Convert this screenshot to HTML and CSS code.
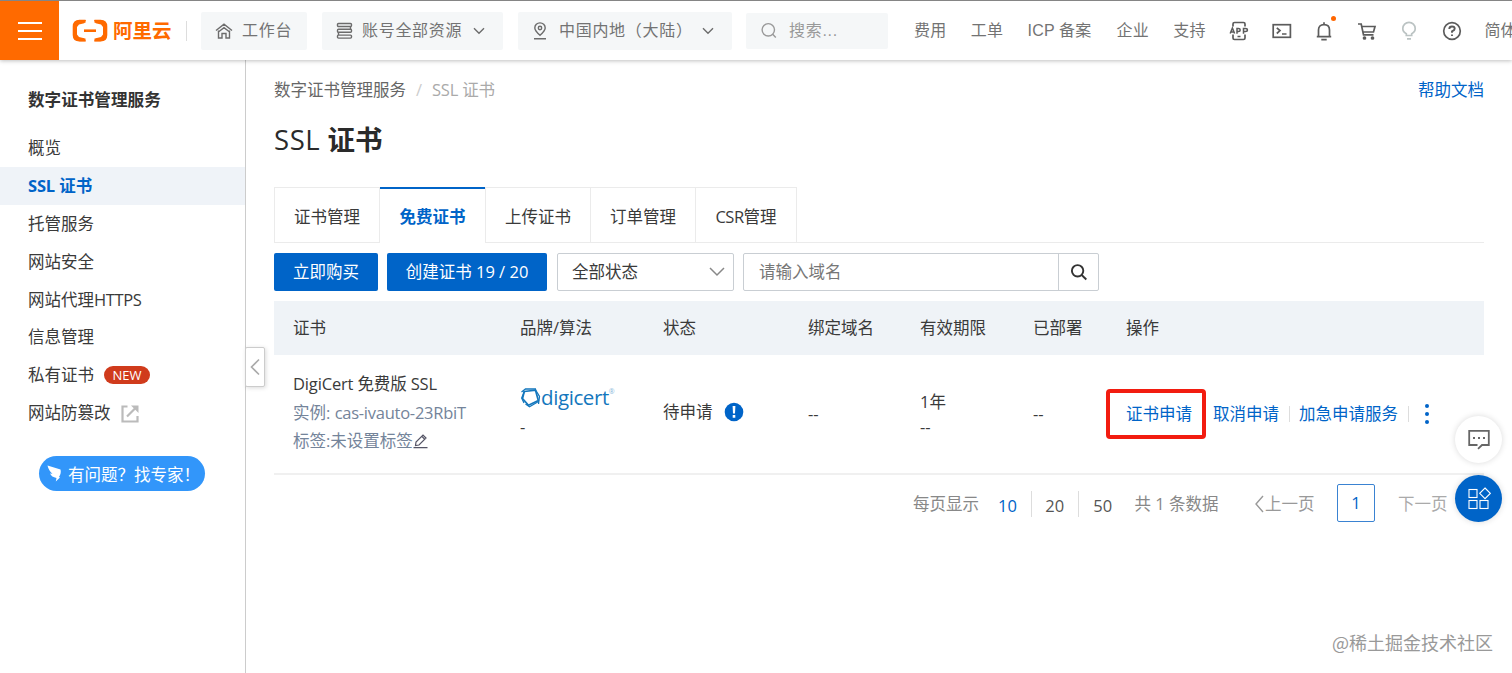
FILE: index.html
```html
<!DOCTYPE html>
<html lang="zh-CN">
<head>
<meta charset="utf-8">
<title>SSL 证书</title>
<link rel="stylesheet" href="styles.css">
</head>
<body>
<header class="topbar">
  <div class="menu-btn"><i></i><i></i><i></i></div>
  <div class="logo">
    <svg width="36" height="24" viewBox="0 0 36 24" fill="none" stroke="#ff6a00">
      <path d="M13.500 2.200H7.500Q2.200 2.200 2.200 7.500V16Q2.200 21 7.500 21H13.500M22.500 2.200H28.500Q33.800 2.200 33.800 7.500V16Q33.800 21 28.500 21H22.500" stroke-width="3"/>
      <path d="M2 4.500Q4 1 8 1H14L12.200 4.200L7 5.500L5 8V15.500L7 18L12.200 19.300L14 22.300H8Q4 22.300 2 19ZM34 4.500Q32 1 28 1H22L23.800 4.200L29 5.500L31 8V15.500L29 18L23.800 19.300L22 22.300H28Q32 22.300 34 19Z" fill="#ff6a00" stroke="none"/>
      <path d="M12 11.700H24" stroke-width="2.600"/>
    </svg>
    <b>阿里云</b>
  </div>
  <div class="pill pill-home">
    <svg width="18" height="18" viewBox="0 0 18 18" class="ic"><path d="M1 8.500L9 2.200L17 8.500M3.500 8.500V16H7V11.500H11V16H14.500V8.500M3 10.300L9 5.600L15 10.300"/></svg>
    <span>工作台</span>
  </div>
  <div class="pill pill-account">
    <svg width="17" height="18" viewBox="0 0 17 18" class="ic"><rect x="1.500" y="1.500" width="14" height="3" rx="1"/><rect x="1.500" y="7.300" width="14" height="3" rx="1"/><rect x="1.500" y="13.100" width="14" height="3" rx="1"/><path d="M14.500 4.500V7.300M2.500 10.300V13.100"/></svg>
    <span>账号全部资源</span>
    <svg width="12" height="8" viewBox="0 0 12 8" class="ic chev"><path d="M1 1.200L6 6.200L11 1.200"/></svg>
  </div>
  <div class="pill pill-region">
    <svg width="14" height="18" viewBox="0 0 14 18" class="ic"><path d="M7 13.300C4 10.500 1.800 8.400 1.800 5.900A5.200 5 0 0 1 12.200 5.900C12.200 8.400 10 10.500 7 13.300ZM1 16.800H13"/><circle cx="7" cy="6" r="1.700"/></svg>
    <span>中国内地（大陆）</span>
    <svg width="12" height="8" viewBox="0 0 12 8" class="ic chev"><path d="M1 1.200L6 6.200L11 1.200"/></svg>
  </div>
  <div class="pill pill-search">
    <svg width="16" height="17" viewBox="0 0 16 17" class="ic"><circle cx="7.300" cy="7.800" r="6.200"/><path d="M11.700 12.300L14.800 15.500"/></svg>
    <span>搜索...</span>
  </div>
  <nav class="topnav">
    <a>费用</a><a>工单</a><a class="icp">ICP 备案</a><a>企业</a><a>支持</a>
  </nav>
  <div class="tools">
    <svg width="20" height="20" viewBox="0 0 20 20" class="ic tool"><path d="M4 5.500V3Q4 1.500 5.500 1.500H14.500Q16 1.500 16 3V5.500M4 13.500V17Q4 18.500 5.500 18.500H14.500Q16 18.500 16 17V13.500M8.500 15.500H11.500"/><path d="M1.200 12.500L3.400 7L5.600 12.500M2 11H4.800M8 12.800V7.500H9.500Q11.200 7.500 11.200 9T9.500 10.500H8M14.500 12.800V7.500H16.500Q18.400 7.500 18.400 9T16.500 10.500H14.500" stroke-width="1.500"/></svg>
    <svg width="20" height="20" viewBox="0 0 20 20" class="ic tool"><rect x="1.200" y="3.700" width="17.200" height="12.600"/><path d="M4.800 6.800L8 9.600L4.800 12.500M10 13H14.500"/></svg>
    <svg width="20" height="20" viewBox="0 0 20 20" class="ic tool"><path d="M4.500 15.500V9Q4.500 3.700 10 3.700T15.500 9V15.500M2.800 15.700H17.200M10 1.200V3.500M7.300 18.600H12.700"/></svg>
    <svg width="20" height="20" viewBox="0 0 20 20" class="ic tool"><path d="M1 3H4.200L6.500 13.800H16.500M4.800 5.500H18L16.500 11H6"/><circle cx="7.500" cy="17" r="1" fill="#555"/><circle cx="15.500" cy="17" r="1" fill="#555"/></svg>
    <svg width="20" height="20" viewBox="0 0 20 20" class="ic tool bulb"><path d="M7.300 14.500V12.700Q3.800 11 3.800 7.500A6.200 6.200 0 0 1 16.200 7.500Q16.200 11 12.700 12.700V14.500ZM8 17.800H12"/></svg>
    <svg width="20" height="20" viewBox="0 0 20 20" class="ic tool"><circle cx="10" cy="10" r="8.300"/><path d="M7.300 8Q7.300 5.500 10 5.500T12.700 7.800Q12.700 9.200 10 10.400V11.800M10 13.400V15" stroke-width="1.900"/></svg>
    <span class="bell-dot"></span>
  </div>
  <a class="lang">简体</a>
</header>
<div class="body">
  <aside class="side">
    <h2>数字证书管理服务</h2>
    <ul>
      <li>概览</li>
      <li class="on"><em>SSL</em> 证书</li>
      <li>托管服务</li>
      <li>网站安全</li>
      <li>网站代理<em>HTTPS</em></li>
      <li>信息管理</li>
      <li>私有证书<span class="new">NEW</span></li>
      <li>网站防篡改<svg class="ext" width="18" height="18" viewBox="0 0 18 18" fill="none" stroke="#bbb" stroke-width="2.200"><path d="M6.500 1.500H1.500V16.500H16.500V11M6 11.500L14.500 3"/><path d="M10 0.500H17.500V8Z" fill="#bbb" stroke="none"/></svg></li>
    </ul>
    <div class="expert"><svg width="15" height="17" viewBox="0 0 15 17" fill="#fff"><path d="M0.500 0.500L13.500 4.500Q14.500 8 12 12L13 12.500L8.800 16.500L9.500 13Q4.500 12 3 8.500L5.500 8.800Q1.800 6 0.500 0.500Z"/></svg><span>有问题？找专家！</span></div>
  </aside>
  <div class="fold"><svg width="10" height="18" viewBox="0 0 10 18" fill="none" stroke="#aaa" stroke-width="1.600"><path d="M9 1.500L1.500 9L9 16.500"/></svg></div>
  <main class="main">
    <div class="crumb"><span>数字证书管理服务</span><i>/</i><span class="cur">SSL 证书</span><a class="help">帮助文档</a></div>
    <h1><span>SSL</span> 证书</h1>
    <div class="tabs">
      <div class="tab">证书管理</div><div class="tab active">免费证书</div><div class="tab">上传证书</div><div class="tab">订单管理</div><div class="tab last"><em>CSR</em>管理</div>
    </div>
    <div class="filters">
      <button class="btn buy">立即购买</button>
      <button class="btn create">创建证书 19 / 20</button>
      <div class="select"><span>全部状态</span><svg width="16" height="10" viewBox="0 0 16 10" fill="none" stroke="#888" stroke-width="1.500"><path d="M1 1L8 8L15 1"/></svg></div>
      <div class="search"><span>请输入域名</span><div class="go"><svg width="18" height="18" viewBox="0 0 18 18" fill="none" stroke="#333" stroke-width="1.900"><circle cx="7.600" cy="7.800" r="5.700"/><path d="M11.700 12L16.300 16.500"/></svg></div></div>
    </div>
    <div class="grid thead"><div>证书</div><div>品牌/算法</div><div>状态</div><div>绑定域名</div><div>有效期限</div><div>已部署</div><div>操作</div></div>
    <div class="grid row">
      <div class="cert"><p class="name">DigiCert 免费版 SSL</p><p>实例: <span class="inst">cas-ivauto-23RbiT</span></p><p>标签:未设置标签<svg width="15" height="16" viewBox="0 0 15 16" fill="none" stroke="#556" stroke-width="1.200"><path d="M2.500 12.500L3 9L10 2L13 5L6 12ZM9 3.500L11.500 6M0.500 14.700H14.500"/></svg></p></div>
      <div class="brand">
        <div class="digi"><svg width="21" height="22" viewBox="0 0 20 22" fill="none" stroke="#1477bd"><path d="M3.800 5.500L15 4.200L17.800 14.500L8 19.200L2 12.500Z" stroke-width="1.700"/><path d="M1 6L5 3H15.500M14.500 3L19 10.500L18 18M18 15.500L9 20.700L5 18M3.500 17L1.200 12L4 5" stroke-width="1.300"/></svg><span>digicert</span><sup>®</sup></div>
        <p>-</p>
      </div>
      <div class="state">待申请<svg width="20" height="20" viewBox="0 0 20 20"><circle cx="10" cy="10" r="9.300" fill="#0064c8"/><path d="M8.600 4H11.400L11 11.500H9ZM8.700 13.100H11.300V15.700H8.700Z" fill="#fff"/></svg></div>
      <div class="dash">--</div>
      <div class="term"><p>1年</p><p>--</p></div>
      <div class="dash">--</div>
      <div class="ops"><a class="boxed">证书申请</a><a>取消申请</a><i></i><a class="urgent">加急申请服务</a><i></i><span class="more"><b></b><b></b><b></b></span></div>
    </div>
    <div class="pager">
      <span class="per">每页显示</span><span class="num cur">10</span><span class="num">20</span><span class="num lastnum">50</span>
      <span class="total">共 1 条数据</span>
      <span class="prev"><svg width="11" height="18" viewBox="0 0 11 18" fill="none" stroke="#999" stroke-width="1.400"><path d="M9 1L2 9L9 17"/></svg>上一页</span>
      <span class="page">1</span>
      <span class="next">下一页</span>
    </div>
  </main>
</div>
<div class="float">
  <div class="chat"><svg width="22" height="21" viewBox="0 0 22 21" fill="none" stroke="#666" stroke-width="1.800"><path d="M9.500 16H1.200V1.800H20.800V16H14L10 19.800"/><path d="M5 9H7M10 9H12M15 9H17" stroke-width="2"/></svg></div>
  <div class="apps"><svg width="24" height="24" viewBox="0 0 24 24" fill="none" stroke="#fff" stroke-width="1.100"><rect x="2" y="2.500" width="8" height="8"/><rect x="2" y="13.500" width="8" height="8"/><rect x="13" y="13.500" width="8" height="8"/><path d="M18 1L23.300 6.300L18 11.600L12.700 6.300Z"/></svg></div>
</div>
<div class="watermark">@稀土掘金技术社区</div>
</body>
</html>
```

FILE: styles.css
```css
* { box-sizing: border-box; margin: 0; padding: 0; }
body {
  width: 1512px; height: 673px; overflow: hidden; position: relative;
  background: #fff; color: #3a3a3a;
  font: 16.5px/24px "Open Sans", "Noto Sans CJK SC", sans-serif;
}
em, i { font-style: normal; }
svg { flex: none; display: block; }
ul { list-style: none; }
.topbar {
  position: relative; z-index: 2; display: flex; align-items: center;
  height: 60px; border-top: 1px solid #858585; background: #fff;
  box-shadow: 0 1px 4px rgba(0,0,0,.25); color: #737373; font-size: 16px;
  font-family: "Liberation Sans", "Noto Sans CJK SC", sans-serif;
  white-space: nowrap; overflow: hidden;
}
.menu-btn {
  flex: none; width: 59px; height: 59px; background: #ff6a00;
  display: flex; flex-direction: column; align-items: center; justify-content: center; gap: 6px;
}
.menu-btn i { width: 24px; height: 2px; background: #fff; }
.logo { flex: none; width: 128px; height: 20px; margin-right: 14px; padding-left: 13px; display: flex; align-items: center; gap: 5px; border-right: 1px solid #ddd; color: #ff6a00; }
.logo b { font-size: 19.5px; font-weight: 700; }
.ic { fill: none; stroke: #6c6c6c; stroke-width: 1.4; }
.pill { flex: none; display: flex; align-items: center; height: 38px; background: #f5f7f8; border-radius: 2px; letter-spacing: .7px; }
.pill span { padding-top: 1px; }
.pill-home { width: 106px; padding-left: 14px; gap: 9px; margin-right: 15px; }
.pill-account { width: 181px; padding-left: 14px; gap: 9px; margin-right: 15px; }
.pill-region { width: 214px; padding-left: 15px; gap: 12px; margin-right: 14px; }
.pill-account .chev { margin-left: 2px; }
.pill-region .chev { margin-left: -3px; }
.pill-search { width: 142px; padding-left: 15px; gap: 12px; height: 36px; margin-right: 26px; color: #999; }
.pill-search .ic { stroke: #999; }
.topnav { flex: none; display: flex; gap: 23.800px; width: 315px; }
.topnav a { flex: none; width: 33px; letter-spacing: .3px; padding-top: 1px; }
.topnav .icp { width: 65px; letter-spacing: .15px; }
.tools { flex: none; position: relative; display: flex; gap: 22.5px; margin-right: 23px; }
.tool { stroke-width: 1.7; stroke: #5c5c5c; }
.bulb { stroke: #bbc3c3; }
.bell-dot { position: absolute; left: 102px; top: -5px; width: 5px; height: 5px; border-radius: 50%; background: #f60; }
.lang { flex: none; padding-top: 1px; }
.body { display: flex; height: 613px; position: relative; }
.side { flex: none; width: 246px; border-right: 1px solid #ccc; padding-top: 28px; }
.side h2 { font-size: 16.6px; line-height: 24px; padding-left: 28px; font-weight: 700; margin-bottom: 17px; color: #333; }
.side li { display: flex; align-items: center; height: 37.8px; padding: 1px 0 0 28px; white-space: pre; }
.side em { letter-spacing: -.4px; }
.side .on { background: #eff3f8; color: #0064c8; font-weight: 700; }
.side .on em { letter-spacing: -.2px; }
.new { margin: -1px 0 0 10px; width: 46px; height: 18px; border-radius: 9px; background: #d03b1c; color: #fff; font-size: 13px; line-height: 18px; text-align: center; }
.ext { margin: 3px 0 0 10px; }
.expert { margin: 25px 0 0 39px; width: 166px; height: 35px; border-radius: 18px; background: #3296fa; color: #fff; display: flex; align-items: center; padding-left: 8px; gap: 6px; white-space: nowrap; font-family: "Noto Sans CJK SC", sans-serif; }
.fold { position: absolute; left: 245px; top: 287px; width: 20px; height: 40px; border: 1px solid #ccc; border-radius: 2px; background: #fff; box-shadow: 1px 1px 4px rgba(0,0,0,.15); display: flex; align-items: center; justify-content: center; }
.main { flex: none; width: 1238px; padding: 18px 0 0 28px; }
.crumb { display: flex; height: 24px; color: #666; }
.crumb i { width: 26px; text-align: center; color: #ccc; }
.crumb .cur { color: #aaa; letter-spacing: -.2px; }
.crumb .help { margin-left: auto; color: #0064c8; }
h1 { font-size: 27.500px; line-height: 38px; margin-top: 19px; font-weight: 700; color: #2a2a2a; }
h1 span { font-weight: 500; letter-spacing: .6px; }
.tabs { position: relative; display: flex; margin-top: 28px; height: 56px; border-bottom: 1px solid #ebebeb; }
.tab { flex: none; width: 105px; height: 56px; border: 1px solid #ebebeb; border-right: 0; text-align: center; line-height: 57px; background: #fff; }
.tab:first-child { width: 106px; border-right: 1px solid #ebebeb; }
.tab.last { width: 102px; border-right: 1px solid #ebebeb; }
.tab em { letter-spacing: -.5px; }
.tab.active { border-top: 2px solid #0064c8; border-bottom: 0; border-left: 0; color: #0064c8; font-weight: 700; line-height: 55px; }
.filters { display: flex; margin-top: 10px; height: 38px; }
.btn { flex: none; border: 0; border-radius: 2px; background: #0064c8; color: #fff; font: inherit; height: 38px; white-space: nowrap; }
.buy { width: 104px; margin-right: 9px; }
.create { width: 160px; margin-right: 10px; }
.select { width: 177px; margin-right: 9px; border: 1px solid #c9ced3; border-radius: 2px; display: flex; align-items: center; justify-content: space-between; padding: 0 8px 0 14px; }
.search { width: 356px; border: 1px solid #c9ced3; border-radius: 2px; display: flex; align-items: center; justify-content: space-between; padding-left: 15px; color: #777; }
.go { width: 40px; height: 36px; border-left: 1px solid #c9ced3; display: flex; align-items: center; justify-content: center; }
.grid { display: grid; grid-template-columns: 227px 143px 145px 112px 113px 93px 358px; padding-left: 19px; white-space: nowrap; }
.thead { margin-top: 10px; height: 54px; align-items: center; background: #eff3f7; }
.row { height: 120px; border-bottom: 2px solid #f0f0f0; }
.cert { padding-top: 15px; line-height: 28.500px; color: #74849a; }
.cert p { display: flex; align-items: center; white-space: pre; }
.cert .name { color: #3a3a3a; letter-spacing: -.15px; }
.inst { letter-spacing: -.25px; }
.brand { padding-top: 30px; }
.digi { display: flex; height: 24px; align-items: center; color: #1477bd; }
.digi span { font-size: 20.5px; letter-spacing: -.4px; font-weight: 500; }
.digi sup { font-size: 7px; align-self: flex-start; line-height: 14px; color: #8ab8da; }
.brand p { line-height: 36px; }
.state { display: flex; align-items: center; height: 113px; gap: 11px; }
.dash { line-height: 118px; }
.term { padding-top: 34px; line-height: 25px; }
.ops { display: flex; align-items: center; height: 118px; color: #0064c8; }
.boxed { width: 100px; height: 50px; margin-left: -20px; margin-right: 7px; border: 4px solid #f21c10; border-radius: 4px; line-height: 42px; padding-left: 16px; }
.ops i { width: 1px; height: 16px; background: #ddd; margin: 0 9.500px; }
.more { display: flex; flex-direction: column; gap: 4px; margin-left: 7px; }
.more b { width: 4px; height: 4px; border-radius: 50%; background: #0064c8; }
.pager { display: flex; align-items: center; margin-top: 9px; padding-left: 639px; height: 38px; color: #888; white-space: nowrap; }
.pager > span { flex: none; }
.per { width: 67.500px; padding-top: 1px; }
.num { width: 47.500px; height: 26px; line-height: 30px; margin-top: 2px; text-align: center; border-right: 1px solid #ddd; color: #555; }
.num.cur { width: 51px; padding-left: 4px; color: #0064c8; }
.lastnum { border: 0; }
.total { width: 126.500px; padding: 1px 0 0 8px; }
.prev { display: flex; align-items: center; width: 84px; color: #999; padding: 1px 0 0 1px; }
.page { width: 38px; height: 38px; border: 1px solid #3a83d2; border-radius: 2px; color: #0064c8; text-align: center; line-height: 36px; }
.next { margin-left: 23px; padding-top: 1px; color: #aaa; }
.float { position: absolute; z-index: 3; left: 1455px; top: 416px; display: flex; flex-direction: column; gap: 12px; }
.chat, .apps { width: 47px; height: 47px; border-radius: 50%; display: flex; align-items: center; justify-content: center; background: #fff; box-shadow: 0 0 6px rgba(0,0,0,.15); }
.apps { background: #0064c8; }
.watermark { position: absolute; right: 19px; bottom: 19px; color: #999; font-size: 18px; line-height: 24px; font-family: "Noto Sans CJK SC", sans-serif; }
```
